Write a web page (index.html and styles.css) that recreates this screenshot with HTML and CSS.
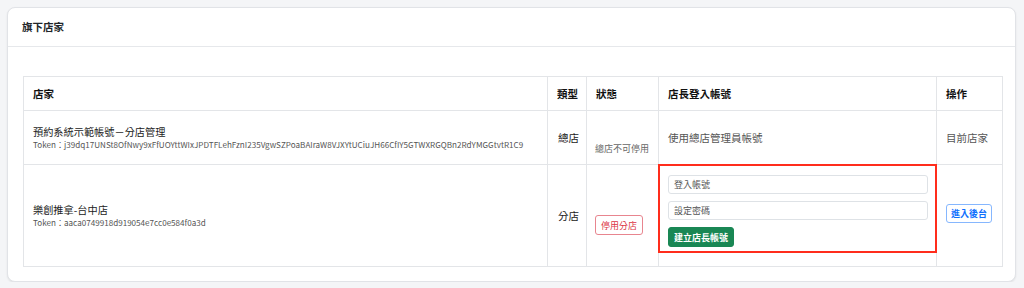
FILE: index.html
```html
<!DOCTYPE html>
<html>

<head lang="zh-Hant">
    <meta charset="UTF-8">
    <title>旗下店家</title>
    <link rel="stylesheet" href="styles.css">
</head>

<body>
    <div class="card">
        <div class="card-header">旗下店家</div>
        <div class="card-body">
            <table class="store-table">
                <colgroup>
                    <col class="c-name">
                    <col class="c-type">
                    <col class="c-status">
                    <col class="c-account">
                    <col class="c-action">
                </colgroup>
                <thead>
                    <tr>
                        <th>店家</th>
                        <th>類型</th>
                        <th>狀態</th>
                        <th>店長登入帳號</th>
                        <th>操作</th>
                    </tr>
                </thead>
                <tbody>
                    <tr class="row-main">
                        <td>
                            <div class="store-name">預約系統示範帳號－分店管理</div>
                            <div class="token">Token：j39dq17UNSt8OfNwy9xFfUOYttWIxJPDTFLehFznI235VgwSZPoaBAIraW8VJXYtUCiuJH66CfIY5GTWXRGQBn2RdYMGGtvtR1C9</div>
                        </td>
                        <td class="type">總店</td>
                        <td class="status"><span class="muted">總店不可停用</span></td>
                        <td class="plain">使用總店管理員帳號</td>
                        <td class="plain">目前店家</td>
                    </tr>
                    <tr class="row-branch">
                        <td>
                            <div class="store-name">樂創推拿-台中店</div>
                            <div class="token">Token：aaca0749918d919054e7cc0e584f0a3d</div>
                        </td>
                        <td class="type">分店</td>
                        <td class="status"><button class="btn btn-outline-danger">停用分店</button></td>
                        <td class="account">
                            <!-- 標示框 -->
                            <div class="mark-box">
                                <input class="form-input" type="text" placeholder="登入帳號">
                                <input class="form-input" type="password" placeholder="設定密碼">
                                <button class="btn btn-success">建立店長帳號</button>
                            </div>
                        </td>
                        <td class="action"><button class="btn btn-outline-primary">進入後台</button></td>
                    </tr>
                </tbody>
            </table>
        </div>
    </div>
</body>

</html>
```

FILE: styles.css
```css
* {
    margin: 0;
    padding: 0;
    box-sizing: border-box;
}

body {
    background-color: #f4f5f7;
    font-family: "Noto Sans CJK TC", "Noto Sans", sans-serif;
    color: #212529;
}

.card {
    margin: 7px 8px 0 7px;
    height: 275px;
    background-color: #fff;
    border: 1px solid #e1e3e7;
    border-radius: 8px;
    box-shadow: 0 1px 2px rgba(0, 0, 0, .08);
}

.card-header {
    height: 39px;
    line-height: 38px;
    padding: 0 14px;
    font-size: 10.5px;
    font-weight: 700;
    border-bottom: 1px solid #e6e8eb;
}

.card-body {
    padding: 29px 12px 0 15px;
}

.store-table {
    width: 100%;
    table-layout: fixed;
    border-collapse: collapse;
    font-size: 10.5px;
}

.c-name {
    width: 524px;
}

.c-type {
    width: 39px;
}

.c-status {
    width: 72px;
}

.c-account {
    width: 278px;
}

.c-action {
    width: 66px;
}

.store-table th,
.store-table td {
    border: 1px solid #e3e5e8;
    text-align: left;
    vertical-align: middle;
    padding: 0 8px 0 9px;
    white-space: nowrap;
}

.store-table th {
    height: 34px;
    font-weight: 700;
    color: #111;
}

.row-main td {
    height: 54px;
}

.row-branch td {
    height: 102px;
}

.store-name {
    font-size: 10.2px;
    line-height: 14px;
    color: #222;
}

.token {
    font-size: 8.1px;
    line-height: 12px;
    color: #555;
}

.store-table .type {
    padding: 0 0 0 10px;
    color: #222;
}

.store-table .status {
    padding: 19px 0 0 8px;
}

.muted {
    font-size: 9px;
    color: #666;
}

.plain {
    color: #555;
}

.store-table td.account {
    vertical-align: top;
    padding: 0;
}

.mark-box {
    position: relative;
    z-index: 1;
    margin: -1px 0 0 -1px;
    width: 279px;
    border: 2px solid #ff2d1c;
    padding: 9px 8px 4px 8px;
    display: flex;
    flex-direction: column;
    align-items: flex-start;
    gap: 7px;
}

.form-input {
    width: 260px;
    height: 19px;
    border: 1px solid #dee2e6;
    border-radius: 3px;
    padding: 0 5px;
    font-family: inherit;
    font-size: 9px;
    color: #333;
    outline: none;
}

.form-input::placeholder {
    color: #555;
}

.btn {
    font-family: inherit;
    font-size: 9px;
    border-radius: 3px;
    background: #fff;
    cursor: pointer;
    line-height: 1;
}

.btn-outline-danger {
    width: 48px;
    height: 20px;
    color: #dc3545;
    border: 1px solid #e8858f;
}

.btn-success {
    width: 66px;
    height: 20px;
    color: #fff;
    font-weight: 700;
    background-color: #198754;
    border: 1px solid #198754;
}

.store-table .action {
    padding: 0 0 4px 9px;
}

.btn-outline-primary {
    width: 46px;
    height: 19px;
    color: #0d6efd;
    font-weight: 700;
    border: 1px solid #86b7fe;
}
```
